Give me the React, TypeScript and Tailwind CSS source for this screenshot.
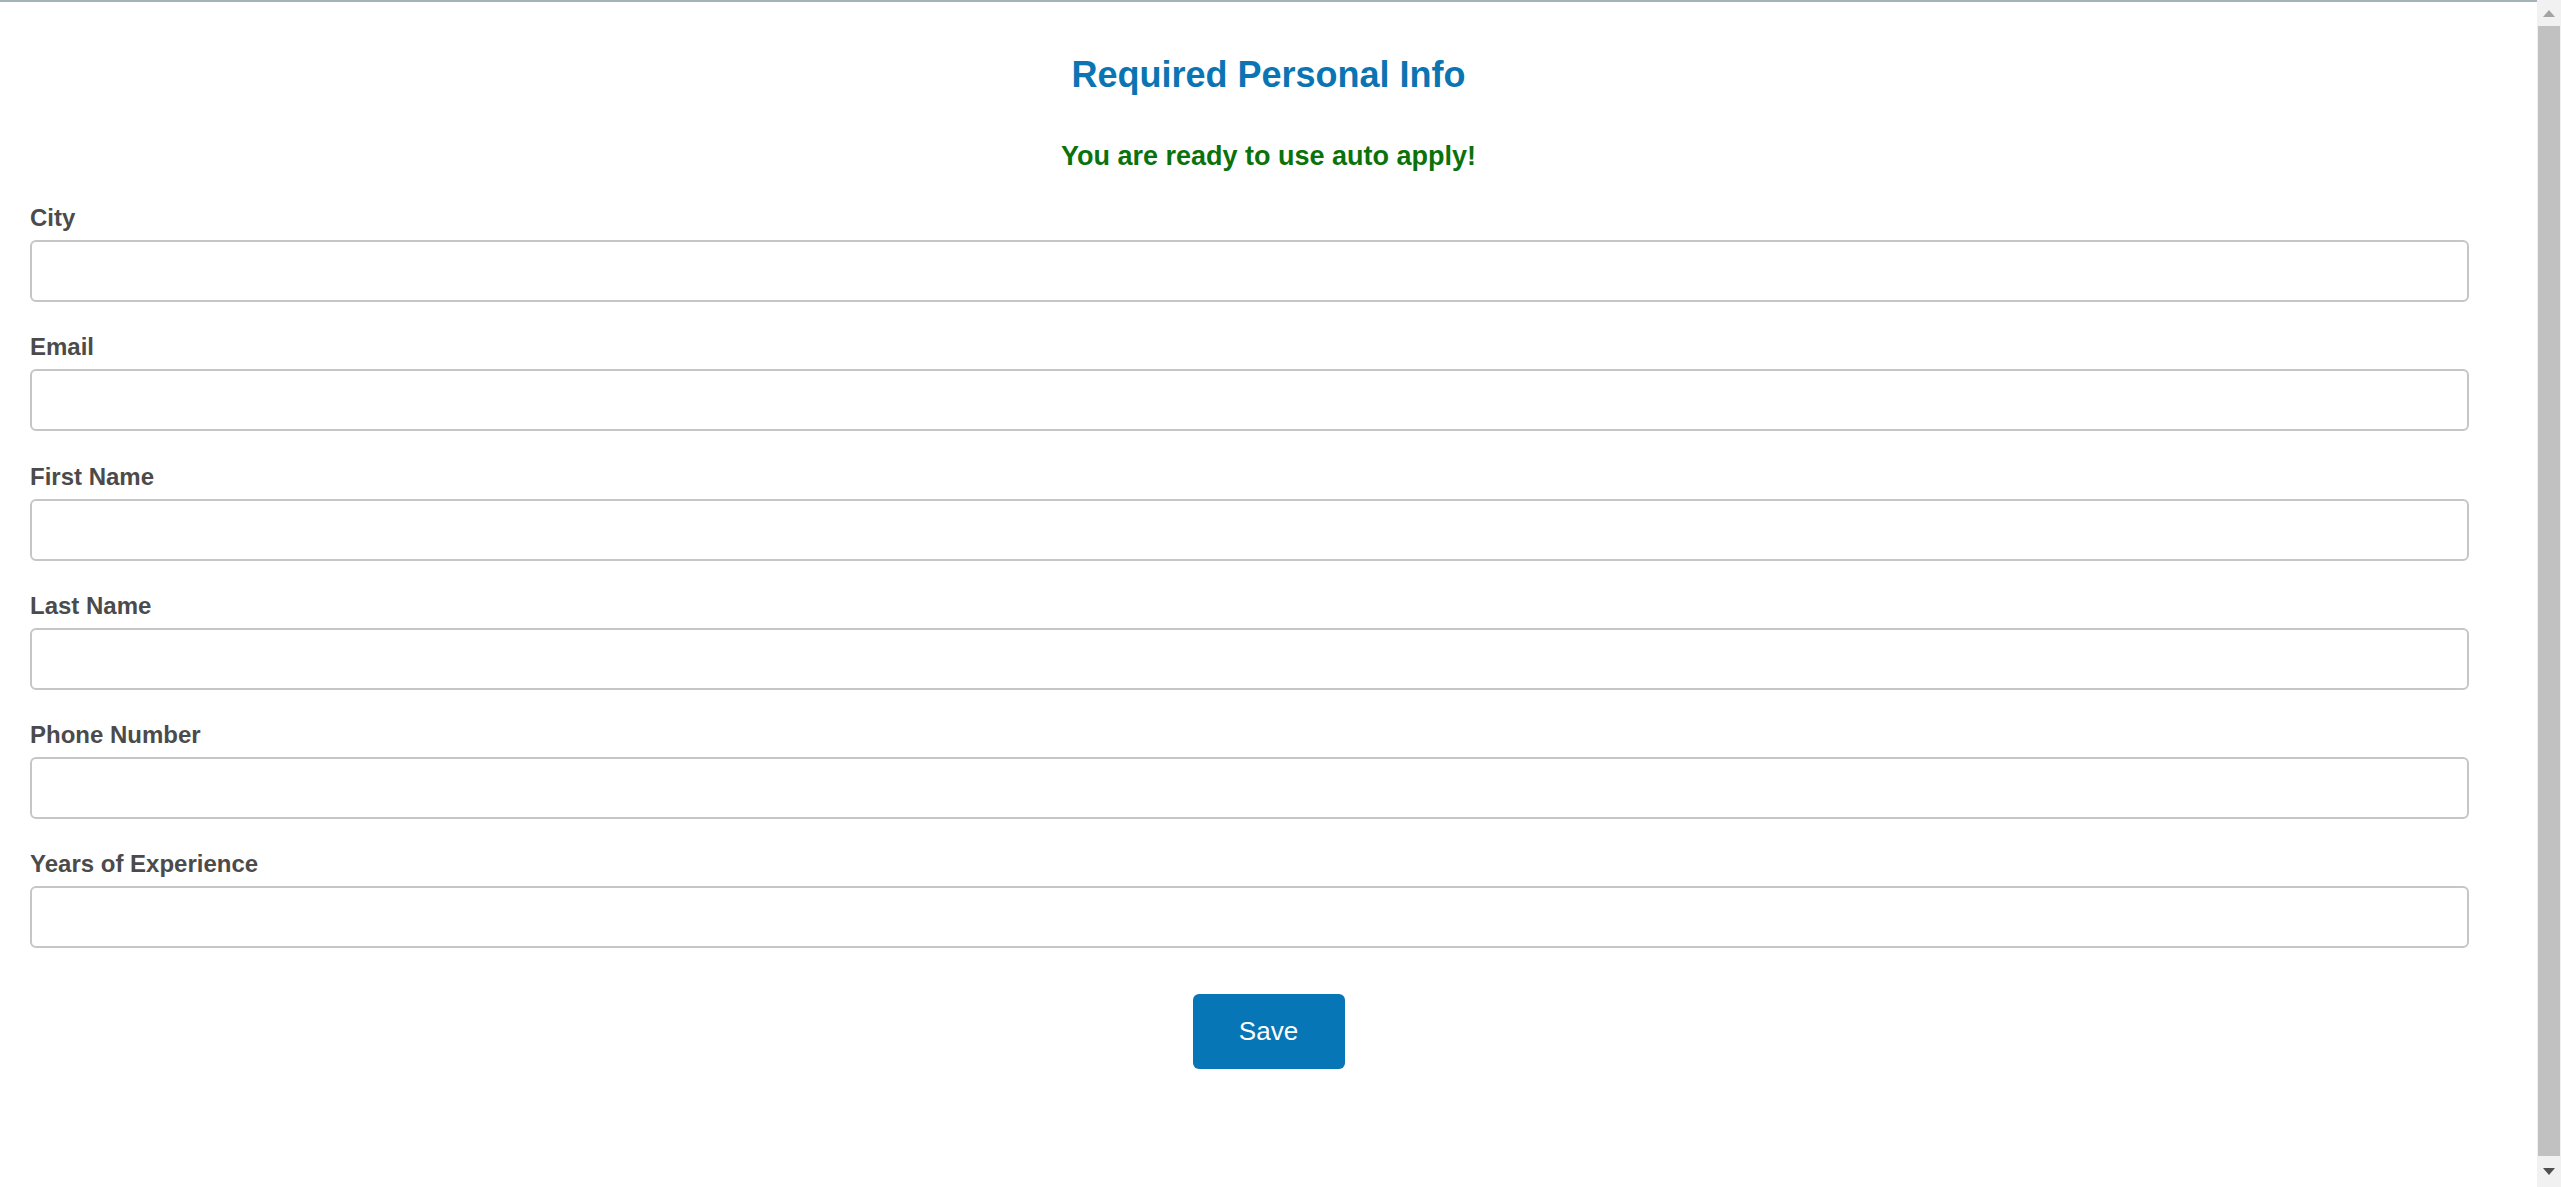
const fields = ['City', 'Email', 'First Name', 'Last Name', 'Phone Number', 'Years of Experience']

function Scrollbar() {
  return (
    <div className="flex w-[24px] flex-col bg-[#f1f1f1]">
      <div className="flex h-[26px] items-center justify-center">
        <svg width="12" height="7" viewBox="0 0 12 7">
          <path d="M6 0 L12 7 L0 7 Z" fill="#a3a3a3" />
        </svg>
      </div>
      <div className="mx-[1px] flex-1 bg-[#c1c1c1]" />
      <div className="flex h-[31px] items-center justify-center">
        <svg width="12" height="7" viewBox="0 0 12 7">
          <path d="M0 0 L12 0 L6 7 Z" fill="#505050" />
        </svg>
      </div>
    </div>
  )
}

export default function App() {
  return (
    <div className="flex h-[1187px] w-full overflow-hidden bg-white font-['Liberation_Sans',Arial,sans-serif]">
      <main className="flex-1 border-t-2 border-[#a3b3b7]">
        <h2 className="mt-[52px] text-center text-[36px] leading-[42px] font-bold text-[#0b75b3]">
          Required Personal Info
        </h2>
        <p className="mt-[44px] text-center text-[27px] leading-[33px] font-bold text-[#0b720b]">
          You are ready to use auto apply!
        </p>

        {/* Fields */}
        <form className="mt-[31px] flex flex-col gap-[31.3px] pl-[30px] pr-[68px]">
          {fields.map((f) => (
            <div key={f} className="flex flex-col">
              <label className="mb-[9px] text-[24px] leading-[27px] font-bold text-[#4b4b4b]">{f}</label>
              <input
                type="text"
                className="h-[62px] w-full rounded-[6px] border-[2.5px] border-[#c6c6c6] bg-white px-3 text-[22px] outline-none"
              />
            </div>
          ))}
        </form>

        <div className="mt-[46px] flex justify-center">
          <button className="h-[75px] w-[152px] rounded-[6px] bg-[#0676b6] text-[26px] text-white">Save</button>
        </div>
      </main>
      <Scrollbar />
    </div>
  )
}
